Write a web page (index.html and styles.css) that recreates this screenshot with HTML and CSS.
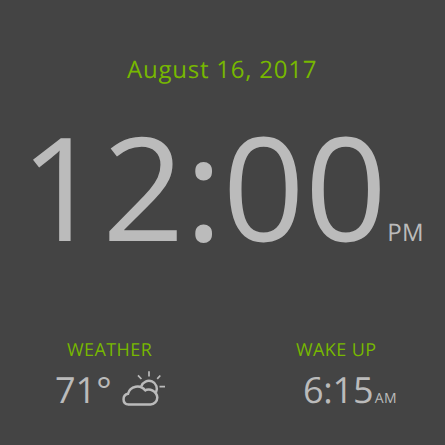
FILE: index.html
```
<!DOCTYPE html>
<html lang="en">
<head>
<meta charset="utf-8">
<title>Clock</title>
<link rel="stylesheet" href="styles.css">
</head>
<body>
<main class="clock">
  <div class="date">August 16, 2017</div>
  <div class="time"><span class="digits">12:00</span><span class="period">PM</span></div>
  <div class="info">
    <section class="weather">
      <h2>WEATHER</h2>
      <div class="value"><span class="temp">71°</span>
        <svg class="icon" viewBox="0 0 46 37" width="46" height="37" fill="none" stroke="currentColor" stroke-width="2.5">
          <path d="M8 34.600A5.500 5.500 0 0 1 8 23.800A9.700 9.700 0 0 1 25.300 20.600"/>
          <path d="M24.400 20.800A8.600 8.600 0 0 1 37.300 27.500A7.300 7.300 0 0 1 30.500 34.600H8"/>
          <path d="M21.300 16.300A8 8 0 1 1 36 22.500"/>
          <path stroke-width="1.700" d="M29 1.300V6.500M18 5.300L21.400 9M40.300 5.500L37.200 8.800M39.500 16.700H45"/>
        </svg>
      </div>
    </section>
    <section class="alarm">
      <h2>WAKE UP</h2>
      <div class="value"><span class="temp hour">6:15</span><span class="small">AM</span></div>
    </section>
  </div>
</main>
</body>
</html>
```
FILE: styles.css
```
body { margin: 0; background: #444; color: #bbb; font-family: "Open Sans", sans-serif; }
.clock { height: 445px; overflow: hidden; box-sizing: border-box; padding-top: 53px; text-rendering: geometricPrecision; }
.date { height: 34px; line-height: 34px; font-size: 24px; letter-spacing: 0.78px; color: #77b800; padding-left: 127px; }
.time { display: flex; align-items: baseline; height: 200px; line-height: 198px; padding-left: 20px; white-space: nowrap; }
.digits { font-size: 144px; }
.period { font-size: 24px; letter-spacing: 0.5px; }
.info { display: flex; padding-top: 50px; }
.weather { width: 229px; padding-left: 67px; box-sizing: border-box; }
h2 { margin: 0; font-size: 18px; font-weight: 400; line-height: 26px; letter-spacing: 0.42px; color: #77b800; }
.value { display: flex; align-items: baseline; font-size: 36px; line-height: 54px; margin-left: -12px; }
.alarm { padding-left: 67px; }
.alarm .value { margin-left: 7px; }
.hour { letter-spacing: -0.25px; }
.small { font-size: 14px; letter-spacing: 0.5px; margin-left: 1.5px; }
.icon { align-self: flex-start; margin: 7px 0 0 8px; }
```
